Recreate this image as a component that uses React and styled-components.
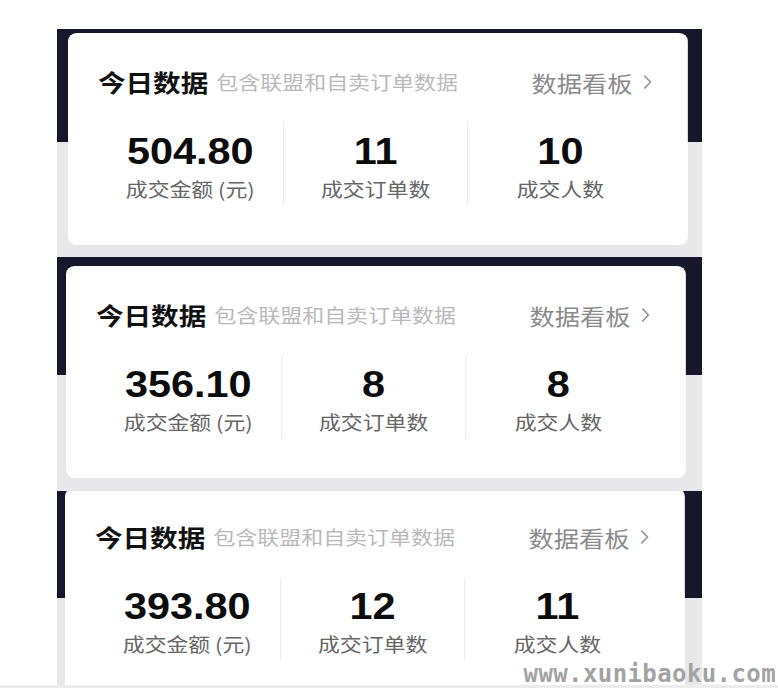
import styled, { createGlobalStyle } from 'styled-components'

const GlobalStyle = createGlobalStyle`
  html, body {
    margin: 0;
    padding: 0;
    background: #fff;
    overflow: hidden;
  }
  body {
    font-family: "Noto Sans CJK SC", "Noto Sans", sans-serif;
  }
`

const Page = styled.div`
  position: relative;
  width: 778px;
  height: 688px;
  overflow: hidden;
  box-sizing: border-box;
  padding: 29px 0 0 57px;
  display: flex;
  flex-direction: column;
`

// one phone screenshot: dark header band, light grey below, card on top
const Shot = styled.section`
  flex-shrink: 0;
  width: 645px;
  height: ${p => p.$height}px;
  box-sizing: border-box;
  padding: ${p => p.$pad};
  overflow: hidden;
  background: linear-gradient(
    to bottom,
    #16172b 0,
    #16172b ${p => p.$dark}px,
    #e8e8ea ${p => p.$dark}px
  );
`

// the source screenshots are stretched ~1.15x horizontally
const Card = styled.div`
  width: 539px;
  box-sizing: border-box;
  background: #fff;
  border-radius: 8px;
  padding: 35px 31px 40px 26px;
  margin-top: ${p => p.$lift || 0}px;
  transform: scaleX(1.15);
  transform-origin: left top;
`

const Header = styled.div`
  display: flex;
  align-items: center;
  height: 28px;
`

const Title = styled.span`
  font-size: 24px;
  font-weight: 700;
  line-height: 28px;
  color: #111;
`

const Hint = styled.span`
  margin-left: 7px;
  font-size: 19.1px;
  line-height: 28px;
  color: #b9b9bb;
`

const BoardLink = styled.a`
  margin-left: auto;
  display: flex;
  align-items: center;
  gap: 9px;
  font-size: 22px;
  line-height: 28px;
  color: #8b8b8d;
  cursor: pointer;
`

const Stats = styled.div`
  display: grid;
  grid-template-columns: repeat(3, 1fr);
  height: 83px;
  margin-top: 26px;
`

const Stat = styled.div`
  display: flex;
  flex-direction: column;
  align-items: center;
  padding-top: 10px;

  & + & {
    border-left: 1px solid #ededed;
  }
`

const Value = styled.div`
  font-family: "Liberation Sans", Arial, sans-serif;
  font-size: 36px;
  font-weight: 700;
  line-height: 40px;
  color: #0c0c0c;
`

const Label = styled.div`
  margin-top: 4px;
  font-size: 19px;
  line-height: 26px;
  color: #666;
`

const Watermark = styled.div`
  position: absolute;
  right: 2px;
  bottom: 3px;
  font-family: "DejaVu Sans Mono", "Liberation Mono", monospace;
  font-size: 24px;
  font-weight: 700;
  letter-spacing: 0.4px;
  line-height: 22px;
  color: #a3a3a3;
`

const BottomEdge = styled.div`
  position: absolute;
  left: 0;
  right: 0;
  bottom: 0;
  height: 3px;
  background: #ececec;
`

const Chevron = () => (
  <svg width="8" height="16" viewBox="0 0 8 16" fill="none">
    <polyline points="1.5,2 6.5,8 1.5,14" stroke="#9a9a9c" strokeWidth="1.6" strokeLinecap="round" strokeLinejoin="round" />
  </svg>
)

const shots = [
  { height: 228, dark: 113, pad: '4px 0 0 11px', lift: 0, amount: '504.80', orders: 11, buyers: 10 },
  { height: 234, dark: 118, pad: '9px 0 0 9px', lift: 0, amount: '356.10', orders: 8, buyers: 8 },
  { height: 200, dark: 107, pad: '0 0 0 8px', lift: -3, amount: '393.80', orders: 12, buyers: 11 },
]

function TodayCard({ amount, orders, buyers, lift }) {
  return (
    <Card $lift={lift}>
      <Header>
        <Title>今日数据</Title>
        <Hint>包含联盟和自卖订单数据</Hint>
        <BoardLink>
          数据看板
          <Chevron />
        </BoardLink>
      </Header>
      <Stats>
        <Stat>
          <Value>{amount}</Value>
          <Label>成交金额 (元)</Label>
        </Stat>
        <Stat>
          <Value>{orders}</Value>
          <Label>成交订单数</Label>
        </Stat>
        <Stat>
          <Value>{buyers}</Value>
          <Label>成交人数</Label>
        </Stat>
      </Stats>
    </Card>
  )
}

export default function App() {
  return (
    <>
      <GlobalStyle />
      <Page>
        {shots.map((s, i) => (
          <Shot key={i} $height={s.height} $dark={s.dark} $pad={s.pad}>
            <TodayCard {...s} />
          </Shot>
        ))}
        <BottomEdge />
        <Watermark>www.xunibaoku.com</Watermark>
      </Page>
    </>
  )
}
